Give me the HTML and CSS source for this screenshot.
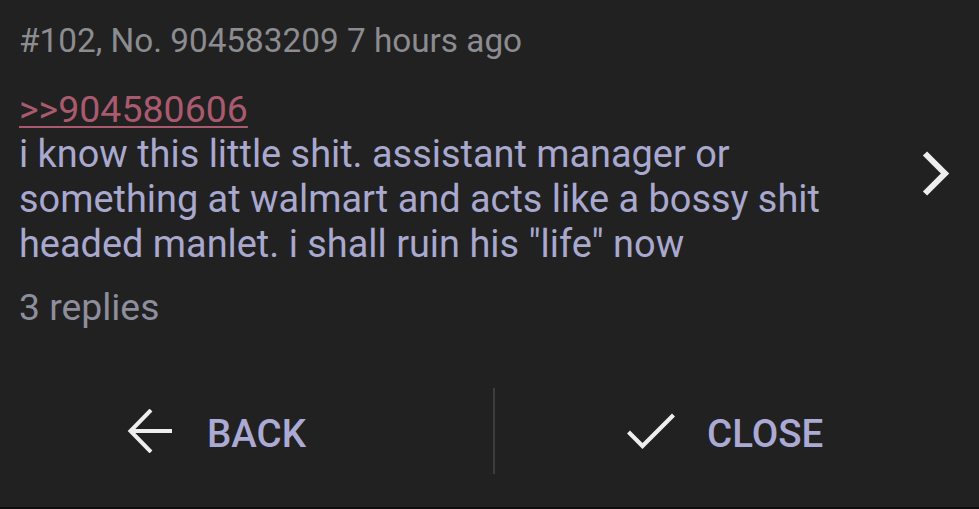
FILE: index.html
```html
<!DOCTYPE html>
<html>
<head>
<meta charset="utf-8">
<link rel="stylesheet" href="styles.css">
</head>
<body>
<div class="screen">
  <div class="post">
    <div class="content">
      <div class="meta">#102, No. 904583209 7 hours ago</div>
      <div class="comment"><a class="quote" href="#">&gt;&gt;904580606</a><br>i know this little shit. assistant manager or<br>something at walmart and acts like a bossy shit<br>headed manlet. i shall ruin his "life" now</div>
      <div class="replies">3 replies</div>
    </div>
    <div class="chev">
      <svg width="40" height="50" viewBox="0 0 40 50"><path d="M10 4.5 L30 24.5 L10 44.5" fill="none" stroke="#eeeeee" stroke-width="6" stroke-linecap="butt" stroke-linejoin="miter"/></svg>
    </div>
  </div>
  <div class="actions">
    <div class="btn btn-back">
      <svg width="46" height="44" viewBox="0 0 46 44"><path d="M45 22 H3.5 M24 1 L3.5 22 L24 43" fill="none" stroke="#eeeeee" stroke-width="4"/></svg>
      <span class="label">BACK</span>
    </div>
    <div class="divider"></div>
    <div class="btn btn-close">
      <svg width="50" height="40" viewBox="0 0 50 40"><path d="M2.5 21 L16.5 35 L47.5 4" fill="none" stroke="#eeeeee" stroke-width="4.2"/></svg>
      <span class="label">CLOSE</span>
    </div>
  </div>
  <div class="strip"></div>
</div>
</body>
</html>
```

FILE: styles.css
```css
html, body {
  margin: 0;
  padding: 0;
  background: #212121;
}
.screen {
  width: 979px;
  height: 509px;
  display: flex;
  flex-direction: column;
  font-family: Roboto, "Noto Sans", sans-serif;
  overflow: hidden;
}
.post {
  display: flex;
  padding: 18px 0 0 19px;
}
.content {
  flex: 1;
  line-height: 45px;
}
.meta {
  font-size: 33.3px;
  color: #8c8c91;
}
.comment {
  margin-top: 24px;
  font-size: 37.9px;
  color: #a9a9cf;
}
.quote {
  font-size: 37.5px;
  color: #aa5a6e;
  text-decoration: underline;
  text-decoration-thickness: 2px;
  text-underline-offset: 4px;
}
.replies {
  margin-top: 18px;
  font-size: 37.3px;
  color: #8e8e9c;
}
.chev {
  width: 80px;
  padding-top: 131px;
}
.chev svg {
  display: block;
  margin-left: 16px;
}
.actions {
  margin-top: 58px;
  height: 86px;
  display: grid;
  grid-template-columns: 493px 2px 1fr;
}
.btn {
  display: flex;
  align-items: center;
}
.btn svg {
  display: block;
}
.btn-back {
  padding-left: 127px;
  gap: 34px;
}
.btn-close {
  padding-left: 131px;
  gap: 31px;
}
.label {
  margin-top: 5px;
  font-size: 38.5px;
  font-weight: 500;
  color: #abaad4;
  line-height: 40px;
}
.divider {
  background: #3d3d3d;
}
.strip {
  margin-top: auto;
  height: 2px;
  background: #0f0f0f;
}
```
